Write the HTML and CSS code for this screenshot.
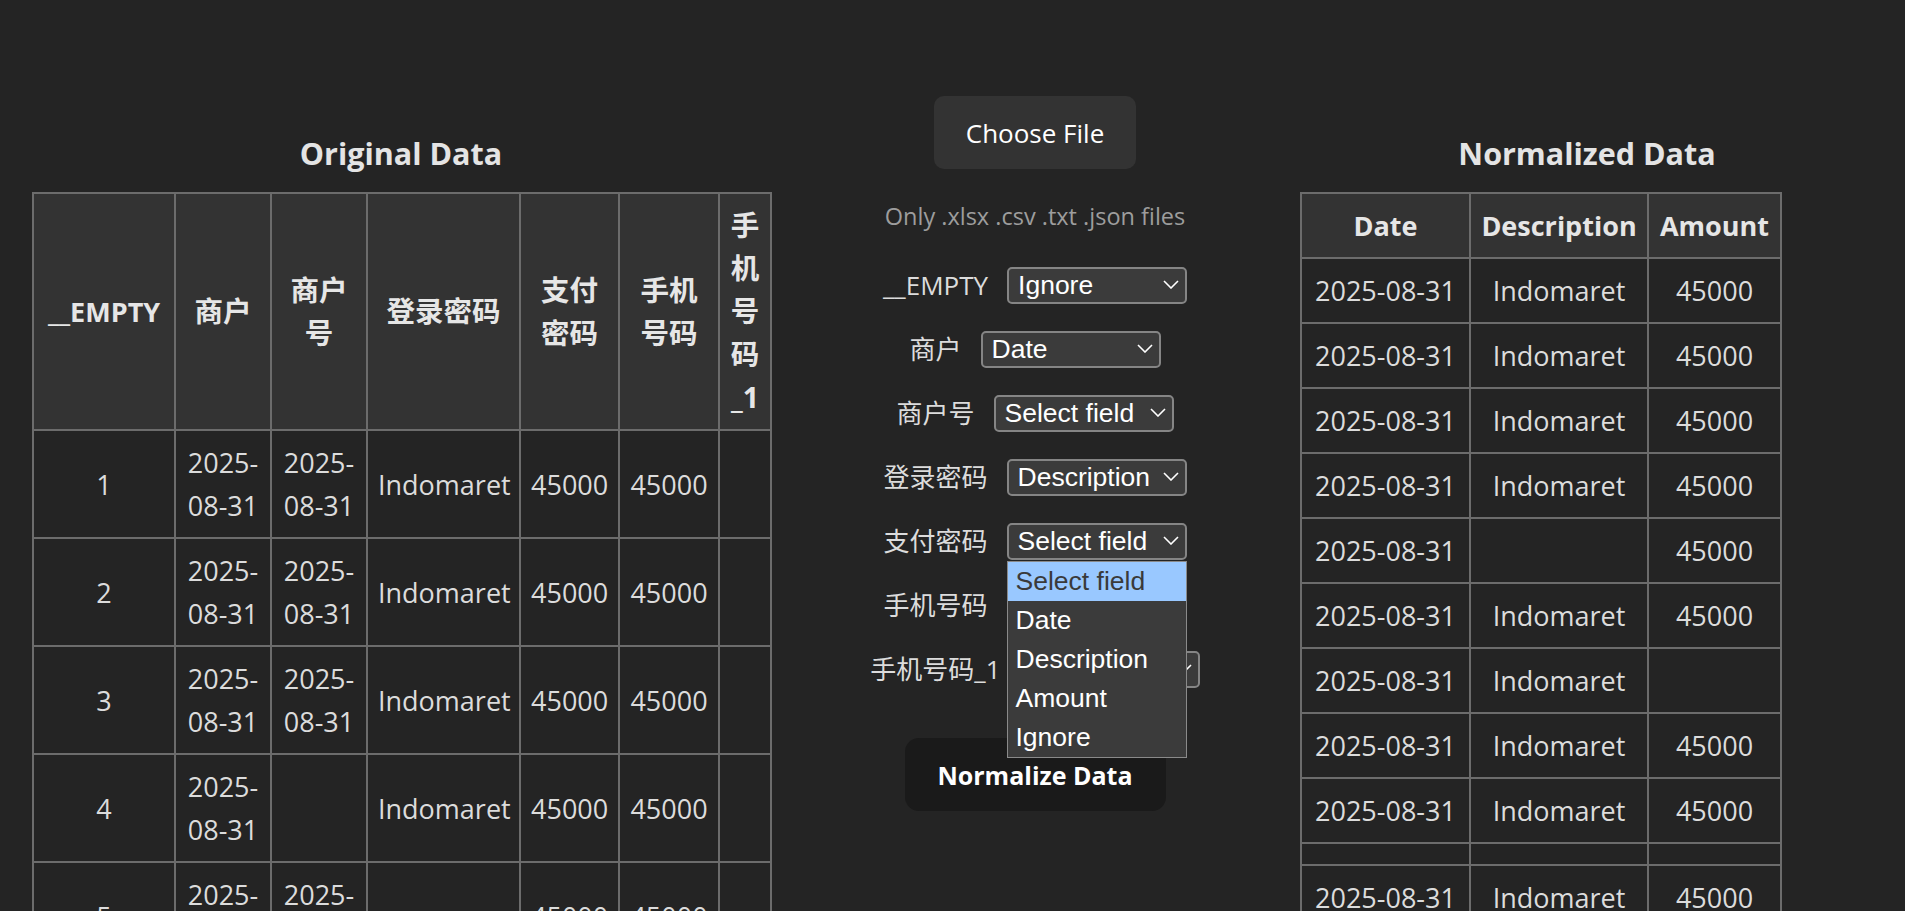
FILE: index.html
```html
<!DOCTYPE html>
<html lang="en">
<head>
<meta charset="utf-8">
<title>Data Normalizer</title>
<link rel="stylesheet" href="styles.css">
</head>
<body>
<div class="app">
  <section class="col col-left">
    <h2 class="title">Original Data</h2>
    <table class="grid grid-orig">
      <thead>
        <tr>
          <th class="o1">__EMPTY</th>
          <th class="o2 cjk">商户</th>
          <th class="o3 cjk">商户号</th>
          <th class="o4 cjk">登录密码</th>
          <th class="o5 cjk">支付密码</th>
          <th class="o6 cjk">手机号码</th>
          <th class="o7 cjk">手机号码_1</th>
        </tr>
      </thead>
      <tbody>
        <tr><td>1</td><td>2025-08-31</td><td>2025-08-31</td><td>Indomaret</td><td>45000</td><td>45000</td><td></td></tr>
        <tr><td>2</td><td>2025-08-31</td><td>2025-08-31</td><td>Indomaret</td><td>45000</td><td>45000</td><td></td></tr>
        <tr><td>3</td><td>2025-08-31</td><td>2025-08-31</td><td>Indomaret</td><td>45000</td><td>45000</td><td></td></tr>
        <tr><td>4</td><td>2025-08-31</td><td></td><td>Indomaret</td><td>45000</td><td>45000</td><td></td></tr>
        <tr><td>5</td><td>2025-08-31</td><td>2025-08-31</td><td></td><td>45000</td><td>45000</td><td></td></tr>
      </tbody>
    </table>
  </section>

  <section class="col col-mid">
    <button class="file-btn" type="button">Choose File</button>
    <p class="hint">Only .xlsx .csv .txt .json files</p>
    <div class="mapping">
      <div class="map-row">
        <label class="map-label">__EMPTY</label>
        <span class="select-wrap">
          <select class="field-select"><option>Select field</option><option>Date</option><option>Description</option><option>Amount</option><option selected>Ignore</option></select>
          <svg class="chev" viewBox="0 0 16 9" width="16" height="9"><path d="M1 1 L8 8 L15 1" fill="none" stroke="#ffffff" stroke-width="1.6"/></svg>
        </span>
      </div>
      <div class="map-row">
        <label class="map-label">商户</label>
        <span class="select-wrap">
          <select class="field-select"><option>Select field</option><option selected>Date</option><option>Description</option><option>Amount</option><option>Ignore</option></select>
          <svg class="chev" viewBox="0 0 16 9" width="16" height="9"><path d="M1 1 L8 8 L15 1" fill="none" stroke="#ffffff" stroke-width="1.6"/></svg>
        </span>
      </div>
      <div class="map-row">
        <label class="map-label">商户号</label>
        <span class="select-wrap">
          <select class="field-select"><option selected>Select field</option><option>Date</option><option>Description</option><option>Amount</option><option>Ignore</option></select>
          <svg class="chev" viewBox="0 0 16 9" width="16" height="9"><path d="M1 1 L8 8 L15 1" fill="none" stroke="#ffffff" stroke-width="1.6"/></svg>
        </span>
      </div>
      <div class="map-row">
        <label class="map-label">登录密码</label>
        <span class="select-wrap">
          <select class="field-select"><option>Select field</option><option>Date</option><option selected>Description</option><option>Amount</option><option>Ignore</option></select>
          <svg class="chev" viewBox="0 0 16 9" width="16" height="9"><path d="M1 1 L8 8 L15 1" fill="none" stroke="#ffffff" stroke-width="1.6"/></svg>
        </span>
      </div>
      <div class="map-row">
        <label class="map-label">支付密码</label>
        <span class="select-wrap">
          <select class="field-select"><option selected>Select field</option><option>Date</option><option>Description</option><option>Amount</option><option>Ignore</option></select>
          <svg class="chev" viewBox="0 0 16 9" width="16" height="9"><path d="M1 1 L8 8 L15 1" fill="none" stroke="#ffffff" stroke-width="1.6"/></svg>
          <ul class="dropdown">
            <li class="opt opt-active">Select field</li>
            <li class="opt">Date</li>
            <li class="opt">Description</li>
            <li class="opt">Amount</li>
            <li class="opt">Ignore</li>
          </ul>
        </span>
      </div>
      <div class="map-row">
        <label class="map-label">手机号码</label>
        <span class="select-wrap">
          <select class="field-select"><option selected>Select field</option><option>Date</option><option>Description</option><option>Amount</option><option>Ignore</option></select>
          <svg class="chev" viewBox="0 0 16 9" width="16" height="9"><path d="M1 1 L8 8 L15 1" fill="none" stroke="#ffffff" stroke-width="1.6"/></svg>
        </span>
      </div>
      <div class="map-row">
        <label class="map-label">手机号码_1</label>
        <span class="select-wrap">
          <select class="field-select"><option selected>Select field</option><option>Date</option><option>Description</option><option>Amount</option><option>Ignore</option></select>
          <svg class="chev" viewBox="0 0 16 9" width="16" height="9"><path d="M1 1 L8 8 L15 1" fill="none" stroke="#ffffff" stroke-width="1.6"/></svg>
        </span>
      </div>
    </div>
    <button class="norm-btn" type="button">Normalize Data</button>
  </section>

  <section class="col col-right">
    <h2 class="title">Normalized Data</h2>
    <table class="grid grid-norm">
      <thead>
        <tr><th class="n1">Date</th><th class="n2">Description</th><th class="n3">Amount</th></tr>
      </thead>
      <tbody>
        <tr><td>2025-08-31</td><td>Indomaret</td><td>45000</td></tr>
        <tr><td>2025-08-31</td><td>Indomaret</td><td>45000</td></tr>
        <tr><td>2025-08-31</td><td>Indomaret</td><td>45000</td></tr>
        <tr><td>2025-08-31</td><td>Indomaret</td><td>45000</td></tr>
        <tr><td>2025-08-31</td><td></td><td>45000</td></tr>
        <tr><td>2025-08-31</td><td>Indomaret</td><td>45000</td></tr>
        <tr><td>2025-08-31</td><td>Indomaret</td><td></td></tr>
        <tr><td>2025-08-31</td><td>Indomaret</td><td>45000</td></tr>
        <tr><td>2025-08-31</td><td>Indomaret</td><td>45000</td></tr>
        <tr><td></td><td></td><td></td></tr>
        <tr><td>2025-08-31</td><td>Indomaret</td><td>45000</td></tr>
        <tr><td>2025-08-31</td><td>Indomaret</td><td>45000</td></tr>
      </tbody>
    </table>
  </section>
</div>
</body>
</html>
```

FILE: styles.css
```css
* {
  box-sizing: border-box;
}

html, body {
  margin: 0;
  padding: 0;
  background: #242424;
  overflow: hidden;
}

body {
  color: #dedede;
  font-family: "Open Sans", "Noto Sans CJK SC", sans-serif;
  font-size: 27px;
  color-scheme: dark;
}

.app {
  display: flex;
  align-items: flex-start;
  padding: 0 31px 0 32px;
}

.col-left {
  width: 738px;
  flex: none;
  padding-top: 132px;
}

.col-mid {
  width: 530px;
  flex: none;
  display: flex;
  flex-direction: column;
  align-items: center;
  padding-top: 96px;
}

.col-right {
  width: 574px;
  flex: none;
  padding-top: 132px;
}

.title {
  margin: 0 0 18px;
  font-size: 30.5px;
  line-height: 42px;
  font-weight: 700;
  text-align: center;
  color: #e4e4e4;
}

/* tables */
.grid {
  border-collapse: collapse;
  table-layout: fixed;
}

.grid th,
.grid td {
  border: 2px solid #6c6c6c;
  padding: 10px 10px;
  line-height: 43px;
  text-align: center;
  vertical-align: middle;
}

.grid th {
  background: #333333;
  font-weight: 700;
  color: #e6e6e6;
}

.grid th.cjk {
  font-size: 28.5px;
}

.grid td {
  background: #242424;
  color: #dcdcdc;
}

.grid-orig {
  width: 738px;
}

.o1 { width: 142px; }
.o2 { width: 96px; }
.o3 { width: 96px; }
.o4 { width: 153px; }
.o5 { width: 99px; }
.o6 { width: 100px; }
.o7 { width: 52px; }

.grid-orig th.o7 {
  padding-left: 10px;
  padding-right: 10px;
}

.grid-norm {
  width: 480px;
}

.n1 { width: 169px; }
.n2 { width: 178px; }
.n3 { width: 133px; }

/* middle column */
.file-btn {
  height: 73px;
  width: 202px;
  border: none;
  border-radius: 10px;
  background: #333333;
  color: #ffffff;
  font-family: "Open Sans", sans-serif;
  font-size: 26px;
  padding: 0;
}

.hint {
  margin: 31px 0 0;
  font-size: 23.5px;
  line-height: 32px;
  color: #9d9d9d;
}

.mapping {
  margin-top: 35px;
  display: flex;
  flex-direction: column;
  align-items: center;
  gap: 27px;
}

.map-row {
  display: flex;
  align-items: center;
  gap: 19px;
  height: 37px;
}

.map-label {
  font-size: 26px;
  line-height: 37px;
  color: #dcdcdc;
  font-family: "Open Sans", "Noto Sans CJK SC", sans-serif;
}

.select-wrap {
  position: relative;
  display: block;
  width: 180px;
  height: 37px;
}

.field-select {
  appearance: none;
  -webkit-appearance: none;
  display: block;
  width: 180px;
  height: 37px;
  margin: 0;
  padding: 0 30px 0 9px;
  border: 2px solid #858585;
  border-radius: 5px;
  background: #3b3b3b;
  color: #ffffff;
  font-family: "Liberation Sans", Arial, sans-serif;
  font-size: 26.5px;
  line-height: 33px;
}

.chev {
  position: absolute;
  right: 8px;
  top: 13px;
  pointer-events: none;
}

.dropdown {
  position: absolute;
  left: 0;
  top: 38px;
  width: 180px;
  margin: 0;
  padding: 0;
  list-style: none;
  background: #3b3b3b;
  border: 1px solid #8a8a8a;
  z-index: 10;
}

.opt {
  height: 39px;
  line-height: 39px;
  padding-left: 8px;
  font-family: "Liberation Sans", Arial, sans-serif;
  font-size: 26.5px;
  color: #ffffff;
  white-space: nowrap;
}

.opt-active {
  background: #99c8ff;
  color: #3a3a3a;
}

.norm-btn {
  margin-top: 50px;
  width: 261px;
  height: 73px;
  border: none;
  border-radius: 14px;
  background: #1a1a1a;
  color: #ffffff;
  font-family: "Open Sans", sans-serif;
  font-size: 25px;
  font-weight: 700;
  padding: 0;
}
```
